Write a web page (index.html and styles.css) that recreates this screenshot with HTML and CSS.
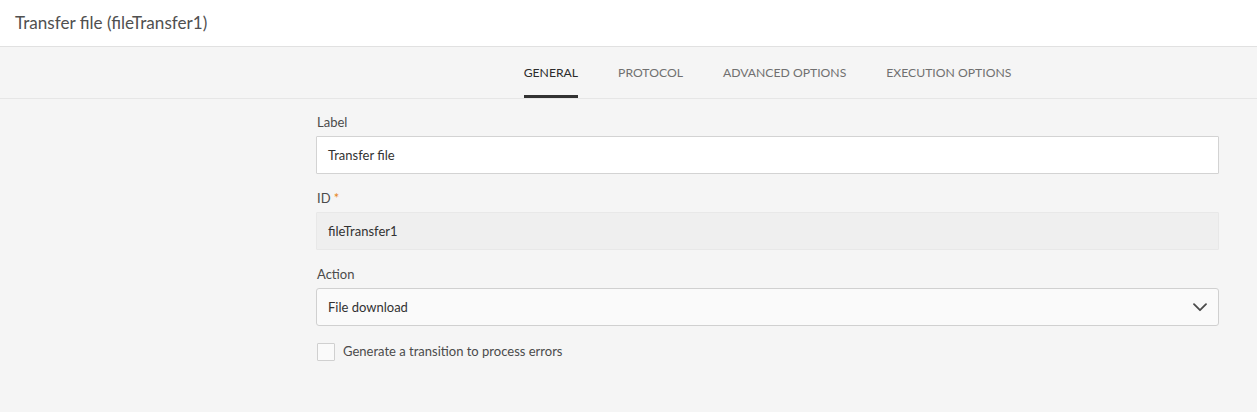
FILE: index.html
```html
<!DOCTYPE html>
<html>
<head>
<meta charset="utf-8">
<link rel="stylesheet" href="styles.css">
</head>
<body>
<header class="header">
  <h1 class="title">Transfer file (fileTransfer1)</h1>
</header>
<nav class="tabbar">
  <div class="spacer"></div>
  <div class="tabs">
    <div class="tab active">GENERAL</div>
    <div class="tab">PROTOCOL</div>
    <div class="tab">ADVANCED OPTIONS</div>
    <div class="tab">EXECUTION OPTIONS</div>
  </div>
</nav>
<main class="main">
  <div class="spacer"></div>
  <form class="form">
    <div class="field">
      <label class="lbl">Label</label>
      <div class="input">Transfer file</div>
    </div>
    <div class="field">
      <label class="lbl">ID <span class="req">*</span></label>
      <div class="input readonly">fileTransfer1</div>
    </div>
    <div class="field">
      <label class="lbl">Action</label>
      <div class="input select">
        <span>File download</span>
        <svg class="chev" width="14" height="9" viewBox="0 0 14 9"><path d="M1 1.2 L7 7.2 L13 1.2" fill="none" stroke="#4b4b4b" stroke-width="1.8" stroke-linecap="round" stroke-linejoin="round"/></svg>
      </div>
    </div>
    <div class="check">
      <span class="box"></span>
      <span class="ctext">Generate a transition to process errors</span>
    </div>
  </form>
</main>
</body>
</html>
```
FILE: styles.css
```css
* { box-sizing: border-box; }
html, body { margin: 0; padding: 0; }
body {
  width: 1257px;
  height: 412px;
  background: #f5f5f5;
  font-family: Lato, "Noto Sans", sans-serif;
  color: #4b4b4b;
  overflow: hidden;
}
.header {
  height: 47px;
  background: #ffffff;
  border-bottom: 1px solid #e1e1e1;
  display: flex;
  align-items: center;
  padding-left: 15px;
}
.title {
  margin: 0;
  font-size: 17.1px;
  font-weight: 400;
  color: #505050;
  padding-bottom: 2px;
}
.tabbar {
  height: 52px;
  border-bottom: 1px solid #e6e6e6;
  display: grid;
  grid-template-columns: 316px 903px;
}
.tabs {
  display: flex;
  justify-content: center;
  gap: 40px;
}
.tab {
  font-size: 12.2px;
  color: #707070;
  display: flex;
  align-items: center;
  padding-top: 3px;
  border-bottom: 3px solid transparent;
  height: 51px;
}
.tab.active {
  color: #2c2c2c;
  border-bottom-color: #323232;
}
.main {
  display: grid;
  grid-template-columns: 316px 903px;
  padding-top: 14px;
}
.form {
  display: flex;
  flex-direction: column;
}
.field {
  display: flex;
  flex-direction: column;
  margin-bottom: 15px;
}
.lbl {
  font-size: 13px;
  color: #4b4b4b;
  height: 23px;
  line-height: 18px;
  padding-left: 1px;
}
.req { color: #e68619; }
.input {
  height: 38px;
  background: #ffffff;
  border: 1px solid #d3d3d3;
  border-radius: 1px;
  font-size: 13px;
  color: #323232;
  display: flex;
  align-items: center;
  padding-left: 11px;
}
.input.readonly {
  background: #efefef;
  border-color: #e8e8e8;
}
.input.select {
  background: #fafafa;
  border-color: #d0d0d0;
  border-radius: 3px;
  justify-content: space-between;
  padding-right: 11px;
}
.chev { display: block; }
.check {
  display: flex;
  align-items: center;
  gap: 8px;
  padding-top: 2px;
}
.box {
  width: 18px;
  height: 18px;
  border: 1px solid #d0d0d0;
  background: #fafafa;
  border-radius: 1px;
  margin-left: 1px;
}
.ctext {
  font-size: 13px;
  color: #4b4b4b;
  padding-bottom: 2px;
}
```
